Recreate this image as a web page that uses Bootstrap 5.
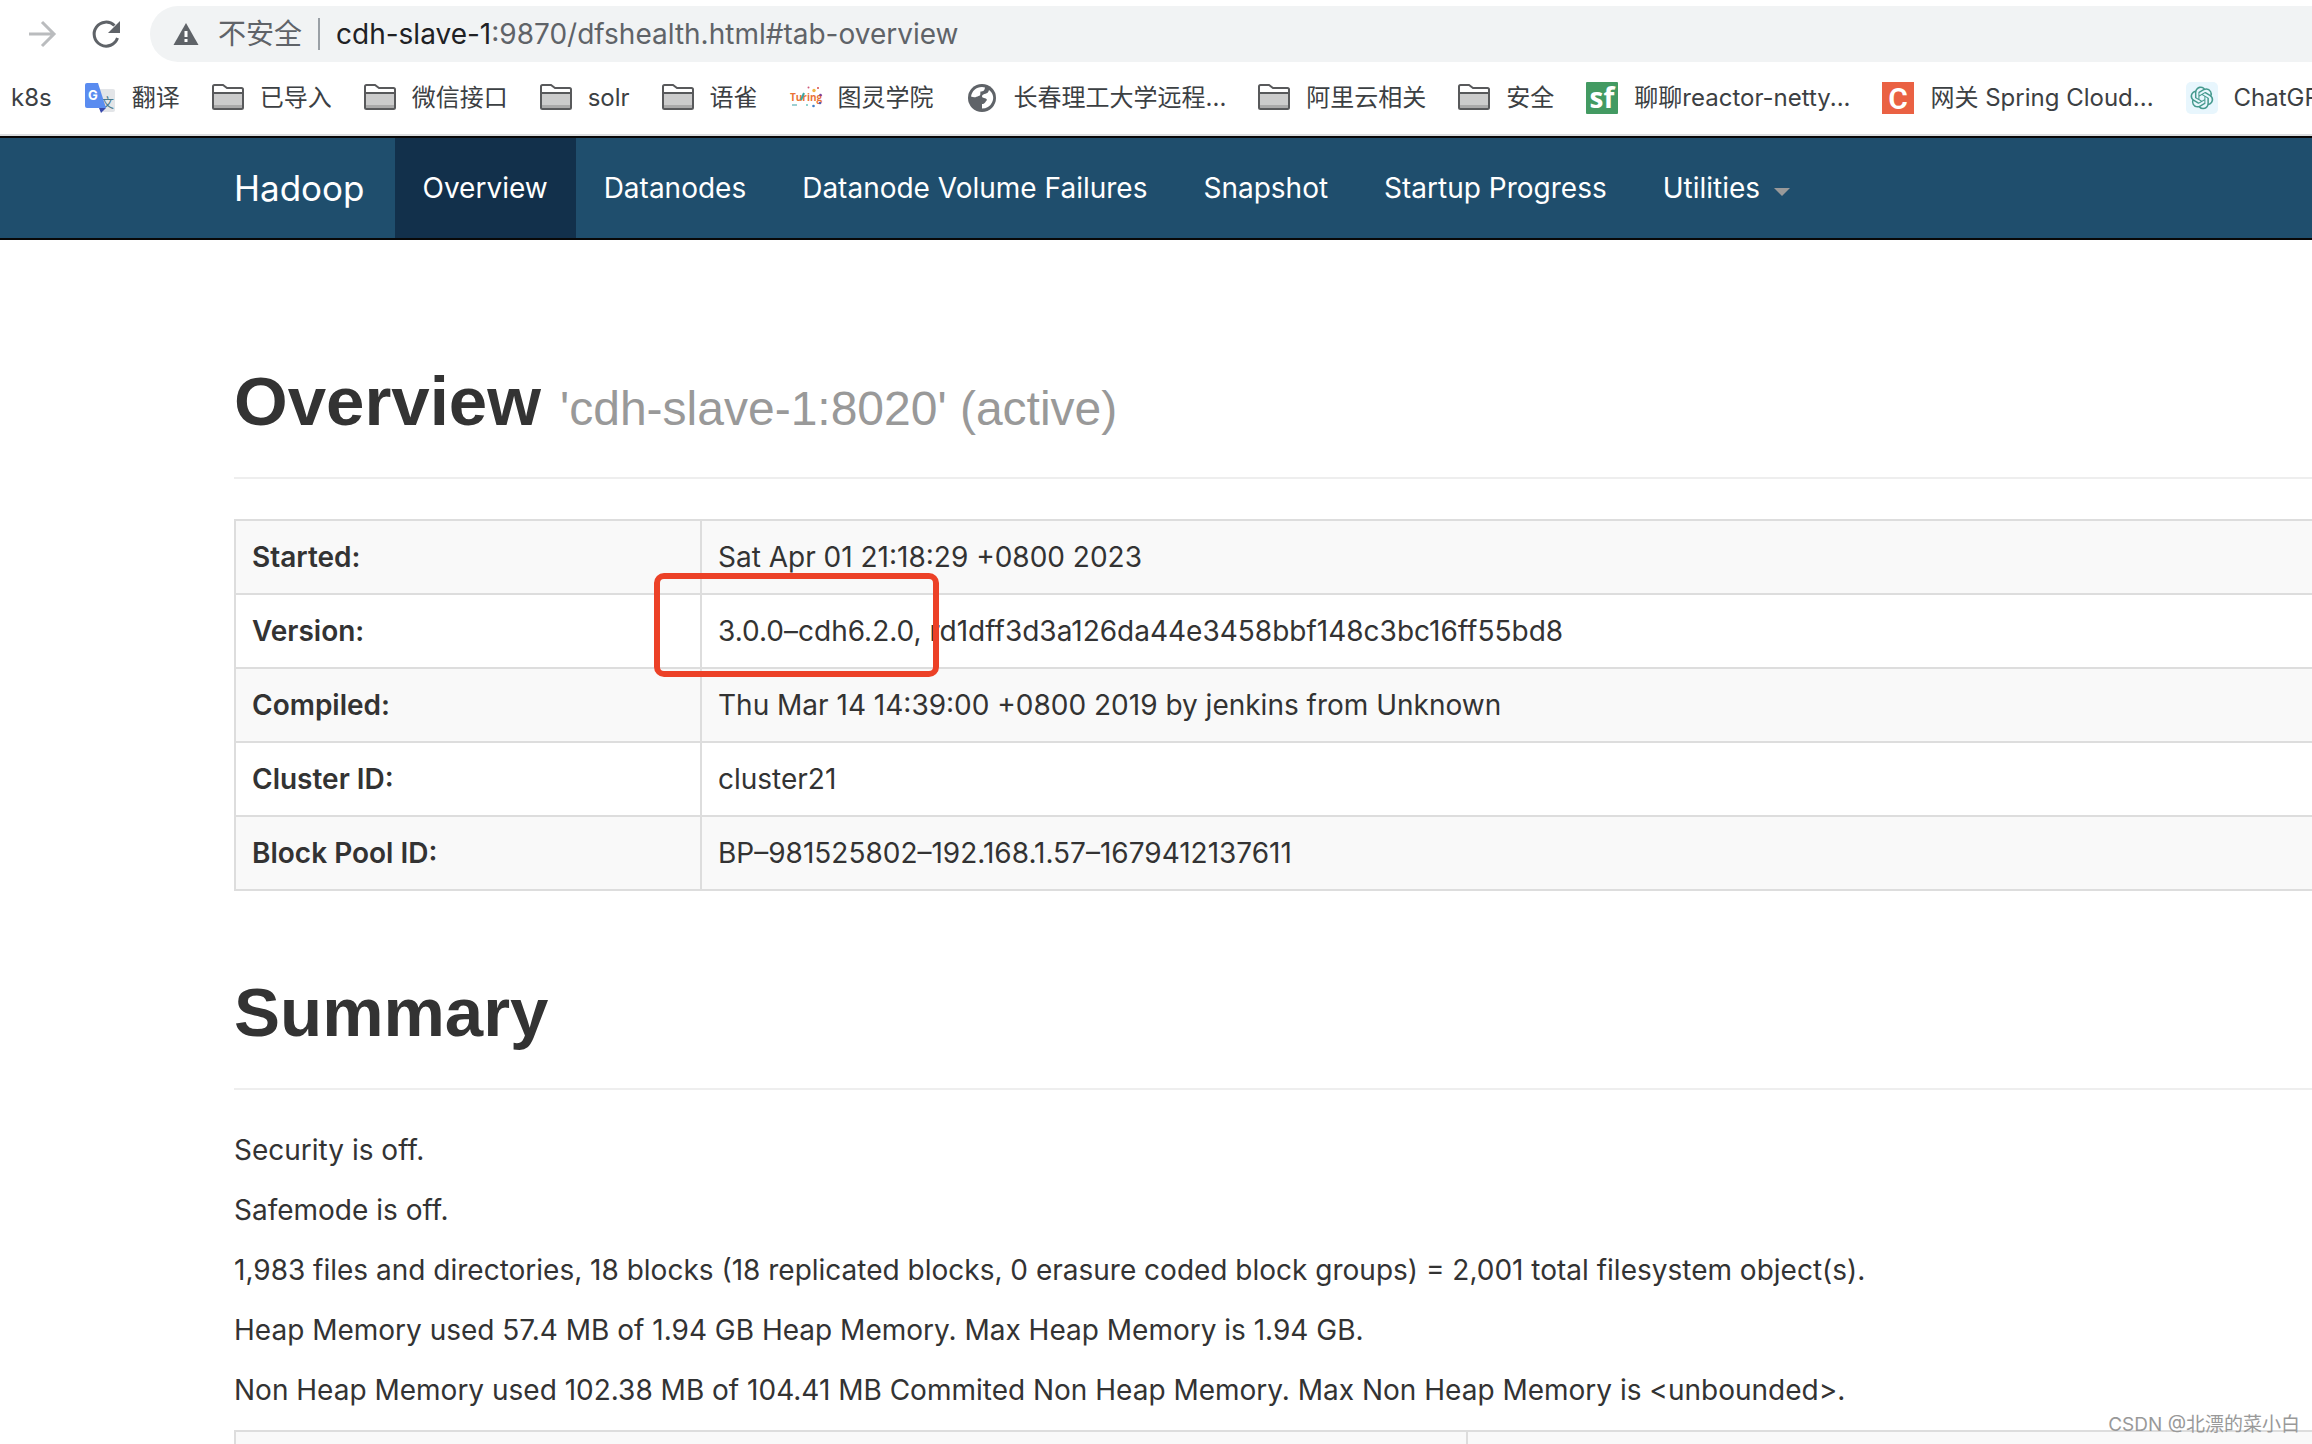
<!DOCTYPE html>
<html lang="zh-CN">
<head>
<meta charset="utf-8">
<title>Namenode information</title>
<meta name="viewport" content="width=device-width, initial-scale=1">
<link href="https://cdn.jsdelivr.net/npm/bootstrap@5.3.0/dist/css/bootstrap.min.css" rel="stylesheet">
<style>
  body { font: 28px/40px Inter, "Noto Sans CJK SC", sans-serif; color: #333; overflow: hidden; height: 100vh; }
  .tool-row { height: 68px; padding: 6px 0 6px 24px; }
  .tool-btn { width: 36px; height: 36px; }
  .tool-row .reload { margin: 0 26px 0 28px; }
  .omnibox { height: 56px; background: #f1f3f4; border-radius: 28px 0 0 28px; padding-left: 22px; color: #5f6368; }
  .omnibox .secure { margin: 0 16px 0 18px; }
  .omnibox .split { width: 2px; height: 32px; background: #9aa0a6; }
  .host { color: #202124; }
  .marks { height: 68px; padding: 0 0 6px 11px; gap: 32px; border-bottom: 2px solid #dcdee0; font-size: 24px; line-height: 32px; }
  .marks a { color: #3c4043; gap: 16px; }
  .marks svg { width: 32px; height: 32px; flex: none; overflow: visible; }
  .topnav { background: #1f4e6d; border: solid #080808; border-width: 2px 0; padding-left: 204px; }
  .topnav a { color: #fff; padding: 30px 28px; height: 100px; }
  .topnav .brand { font-size: 35px; padding: 30px; }
  .topnav .active { background: #12304b; }
  .topnav .dropdown-toggle::after { border-top: 8px solid #999; border-right: 8px solid transparent; border-left: 8px solid transparent; margin-left: 14px; vertical-align: 2px; }
  main { padding-left: 234px; }
  .page-head { margin: 82px 0 40px; padding-bottom: 36px; border-bottom: 2px solid #eee; }
  .page-head.first { margin-top: 122px; }
  .page-head h1 { font: 700 69px/79px "Liberation Sans", sans-serif; margin: 0; }
  .page-head h1 span { font-size: 48px; line-height: 1; font-weight: 400; color: #999; }
  .info { border-collapse: collapse; width: 100%; }
  .info th, .info td { border: 2px solid #ddd; border-right: 0; padding: 16px; }
  .info th { font-weight: 600; }
  .info tr:nth-child(odd) { background: #f9f9f9; }
  .info .key { width: 466px; }
  .info .half { width: 1232px; }
  .info .half, .info .rest { height: 74px; }
  .redbox { left: -48px; top: -22px; width: 285px; height: 104px; border: 6px solid #ec4127; border-radius: 10px; }
  main p { margin-bottom: 20px; }
  .stamp { right: 12px; bottom: 4px; font-size: 19px; line-height: 30px; color: #999; }
</style>
</head>
<body class="position-relative">
<svg class="d-none" aria-hidden="true">
  <symbol id="folder" viewBox="0 0 32 32">
    <path d="M1 25.500V4.500Q1 3 2.500 3h8.500l4 3h14.500Q31 6 31 7.500v18q0 1.500-1.500 1.500h-27Q1 27 1 25.500z" fill="#fff"/>
    <path d="M1 11h30v15H1z" fill="#ccc"/><path d="M1 23h30v3H1z" fill="#aaa"/>
    <path d="M1 25.500V4.500Q1 3 2.500 3h8.500l4 3h14.500Q31 6 31 7.500v18q0 1.500-1.500 1.500h-27Q1 27 1 25.500zM1 11h30" fill="none" stroke="#58595b" stroke-width="2"/>
  </symbol>
</svg>
<header>
  <div class="tool-row d-flex align-items-center">
    <button class="tool-btn btn p-0 border-0 d-flex" aria-label="前进"><svg viewBox="0 0 36 36" fill="none" stroke="#babcbe" stroke-width="3"><path d="M5 18h25M18 6l12 12-12 12"/></svg></button>
    <button class="tool-btn reload btn p-0 border-0 d-flex" aria-label="重新加载"><svg viewBox="0 0 36 36"><path d="M29.500 22A12 12 0 1 1 26.500 9.500" fill="none" stroke="#5f6368" stroke-width="3"/><path d="M32 5v12H20z" fill="#5f6368"/></svg></button>
    <div class="omnibox d-flex align-items-center flex-grow-1">
      <svg width="28" height="24" viewBox="0 0 28 24"><path d="M14 1l12.500 22h-25z" fill="#5f6368"/><path d="M14 9v6M14 17v3" stroke="#fff" stroke-width="3"/></svg>
      <span class="secure">不安全</span><span class="split"></span>
      <a class="ms-3 text-decoration-none text-reset" href="#tab-overview"><span class="host">cdh-slave-1</span>:9870/dfshealth.html#tab-overview</a>
    </div>
  </div>
  <nav class="marks d-flex align-items-center text-nowrap overflow-hidden" aria-label="书签">
    <a class="d-flex align-items-center text-decoration-none" href="#">k8s</a>
    <a class="d-flex align-items-center text-decoration-none" href="#"><svg viewBox="0 0 32 32"><path d="M12 7h17q2 0 2 2v19q0 2-2 2H19z" fill="#e3e5e8"/><text x="17" y="25" font-size="13" fill="#4a7a8c" font-family="Noto Sans CJK SC">文</text><path d="M3 1h11l8 25H3q-2 0-2-2V3q0-2 2-2z" fill="#5a8cf0"/><path d="M15 26h7l-5 5z" fill="#3949ab"/><text x="4" y="18" font-size="13" font-weight="700" fill="#fff">G</text></svg>翻译</a>
    <a class="d-flex align-items-center text-decoration-none" href="#"><svg><use href="#folder"/></svg>已导入</a>
    <a class="d-flex align-items-center text-decoration-none" href="#"><svg><use href="#folder"/></svg>微信接口</a>
    <a class="d-flex align-items-center text-decoration-none" href="#"><svg><use href="#folder"/></svg>solr</a>
    <a class="d-flex align-items-center text-decoration-none" href="#"><svg><use href="#folder"/></svg>语雀</a>
    <a class="d-flex align-items-center text-decoration-none" href="#"><svg viewBox="0 0 32 32"><text x="0" y="19" font-size="10" font-weight="700" fill="#ea7236" font-family="Open Sans">Turing</text><path d="M11 18l3-7" stroke="#3da7a0" stroke-width="2"/><path d="M2 23h5" stroke="#9ccfd2" stroke-width="2"/><circle cx="24" cy="8.500" r="1.700" fill="#f0b545"/><circle cx="18.500" cy="5.500" r="1" fill="#d05a7a"/><circle cx="28" cy="6" r="1" fill="#d84a4a"/><circle cx="30.500" cy="13" r="1.300" fill="#7a3f9a"/><circle cx="30" cy="21" r="1.300" fill="#5360b0"/><circle cx="23.500" cy="24" r="1.300" fill="#3f7fc8"/><circle cx="17" cy="23" r="1" fill="#6cc3c0"/></svg>图灵学院</a>
    <a class="d-flex align-items-center text-decoration-none" href="#"><svg viewBox="0 0 32 32"><circle cx="16" cy="16" r="14" fill="#5f6368"/><path d="M5 14.500C6 9 10 5 16 5l3 .5c-.5 3-1.500 4-4.500 4-.5 3 .5 4-2 4.500-2 1-4 2-7.500.5z" fill="#fff"/><path d="M23 8c4 3 5.500 8 3 12.500-2 4-5.500 6-10 6v-4.500c3 0 3-2 5-4-1-3-5-1-5-4 1-3 6-1 7-6z" fill="#fff"/></svg>长春理工大学远程...</a>
    <a class="d-flex align-items-center text-decoration-none" href="#"><svg><use href="#folder"/></svg>阿里云相关</a>
    <a class="d-flex align-items-center text-decoration-none" href="#"><svg><use href="#folder"/></svg>安全</a>
    <a class="d-flex align-items-center text-decoration-none" href="#"><svg viewBox="0 0 32 32"><rect width="32" height="32" rx="1" fill="#439a62"/><text x="16" y="26" text-anchor="middle" font-size="28" font-weight="700" fill="#fff" font-family="Open Sans">sf</text></svg>聊聊reactor-netty...</a>
    <a class="d-flex align-items-center text-decoration-none" href="#"><svg viewBox="0 0 32 32"><rect width="32" height="32" fill="#ea6143"/><text x="16" y="27" text-anchor="middle" font-size="30" font-weight="600" fill="#fff" font-family="Roboto">C</text></svg>网关 Spring Cloud...</a>
    <a class="d-flex align-items-center text-decoration-none" href="#"><svg viewBox="0 0 32 32"><rect width="32" height="32" rx="5" fill="#e8f6fd"/><g transform="translate(4.500 4.500) scale(.95)"><path fill="#459a8e" d="M22.2819 9.8211a5.9847 5.9847 0 0 0-.5157-4.9108 6.0462 6.0462 0 0 0-6.5098-2.9A6.0651 6.0651 0 0 0 4.9807 4.1818a5.9847 5.9847 0 0 0-3.9977 2.9 6.0462 6.0462 0 0 0 .7427 7.0966 5.98 5.98 0 0 0 .511 4.9107 6.051 6.051 0 0 0 6.5146 2.9001A5.9847 5.9847 0 0 0 13.2599 24a6.0557 6.0557 0 0 0 5.7718-4.2058 5.9894 5.9894 0 0 0 3.9977-2.9001 6.0557 6.0557 0 0 0-.7475-7.0729zm-9.022 12.6081a4.4755 4.4755 0 0 1-2.8764-1.0408l.1419-.0804 4.7783-2.7582a.7948.7948 0 0 0 .3927-.6813v-6.7369l2.02 1.1686a.071.071 0 0 1 .038.052v5.5826a4.504 4.504 0 0 1-4.4945 4.4944zm-9.6607-4.1254a4.4708 4.4708 0 0 1-.5346-3.0137l.142.0852 4.783 2.7582a.7712.7712 0 0 0 .7806 0l5.8428-3.3685v2.3324a.0804.0804 0 0 1-.0332.0615L9.74 19.9502a4.4992 4.4992 0 0 1-6.1408-1.6464zM2.3408 7.8956a4.485 4.485 0 0 1 2.3655-1.9728V11.6a.7664.7664 0 0 0 .3879.6765l5.8144 3.3543-2.0201 1.1685a.0757.0757 0 0 1-.071 0l-4.8303-2.7865A4.504 4.504 0 0 1 2.3408 7.872zm16.5963 3.8558L13.1038 8.364 15.1192 7.2a.0757.0757 0 0 1 .071 0l4.8303 2.7913a4.4944 4.4944 0 0 1-.6765 8.1042v-5.6772a.79.79 0 0 0-.407-.667zm2.0107-3.0231l-.142-.0852-4.7735-2.7818a.7759.7759 0 0 0-.7854 0L9.409 9.2297V6.8974a.0662.0662 0 0 1 .0284-.0615l4.8303-2.7866a4.4992 4.4992 0 0 1 6.6802 4.66zM8.3065 12.863l-2.02-1.1638a.0804.0804 0 0 1-.038-.0567V6.0742a4.4992 4.4992 0 0 1 7.3757-3.4537l-.142.0805L8.704 5.459a.7948.7948 0 0 0-.3927.6813zm1.0976-2.3654l2.602-1.4998 2.6069 1.4998v2.9994l-2.5974 1.4997-2.6067-1.4997Z"/></g></svg>ChatGPT</a>
  </nav>
</header>
<nav class="topnav d-flex text-nowrap">
  <a class="brand text-decoration-none" href="#">Hadoop</a>
  <a class="active text-decoration-none" href="#tab-overview">Overview</a>
  <a class="text-decoration-none" href="#">Datanodes</a>
  <a class="text-decoration-none" href="#">Datanode Volume Failures</a>
  <a class="text-decoration-none" href="#">Snapshot</a>
  <a class="text-decoration-none" href="#">Startup Progress</a>
  <a class="dropdown-toggle text-decoration-none" href="#">Utilities</a>
</nav>
<main>
  <div class="page-head first"><h1>Overview <span>'cdh-slave-1:8020' (active)</span></h1></div>
  <table class="info">
    <tr><th class="key" scope="row">Started:</th><td>Sat Apr 01 21:18:29 +0800 2023</td></tr>
    <tr><th scope="row">Version:</th><td class="position-relative">3.0.0–cdh6.2.0, rd1dff3d3a126da44e3458bbf148c3bc16ff55bd8<span class="redbox position-absolute"></span></td></tr>
    <tr><th scope="row">Compiled:</th><td>Thu Mar 14 14:39:00 +0800 2019 by jenkins from Unknown</td></tr>
    <tr><th scope="row">Cluster ID:</th><td>cluster21</td></tr>
    <tr><th scope="row">Block Pool ID:</th><td>BP–981525802–192.168.1.57–1679412137611</td></tr>
  </table>
  <div class="page-head"><h1>Summary</h1></div>
  <p>Security is off.</p>
  <p>Safemode is off.</p>
  <p>1,983 files and directories, 18 blocks (18 replicated blocks, 0 erasure coded block groups) = 2,001 total filesystem object(s).</p>
  <p>Heap Memory used 57.4 MB of 1.94 GB Heap Memory. Max Heap Memory is 1.94 GB.</p>
  <p>Non Heap Memory used 102.38 MB of 104.41 MB Commited Non Heap Memory. Max Non Heap Memory is &lt;unbounded&gt;.</p>
  <table class="info"><tr><td class="half"></td><td class="rest"></td></tr></table>
</main>
<div class="stamp position-absolute">CSDN @北漂的菜小白</div>
<script src="https://cdn.jsdelivr.net/npm/bootstrap@5.3.0/dist/js/bootstrap.bundle.min.js"></script>
</body>
</html>
